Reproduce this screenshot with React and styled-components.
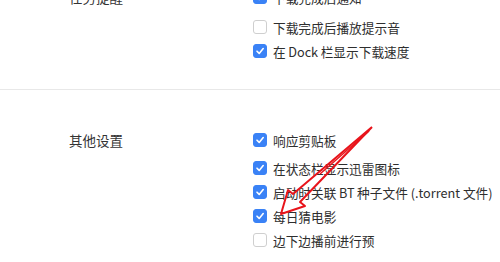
import React from 'react';
import styled, { createGlobalStyle } from 'styled-components';

const GlobalStyle = createGlobalStyle`
    html, body {
        margin: 0;
        padding: 0;
        background: #ffffff;
    }
    body {
        width: 500px;
        height: 262px;
        overflow: hidden;
        font-family: "Noto Sans CJK SC", "Noto Sans", sans-serif;
        color: #333333;
    }
`;

const topOptions = [
    { text: '下载完成后通知', checked: true, gap: 0 },
    { text: '下载完成后播放提示音', checked: false, gap: 6 },
    { text: '在\u2009Dock\u2009栏显示下载速度', checked: true, gap: 0 },
];

const otherOptions = [
    { text: '响应剪贴板', checked: true, gap: 0 },
    { text: '在状态栏显示迅雷图标', checked: true, gap: 4 },
    { text: '启动时关联\u2009BT\u2009种子文件 (.torrent 文件)', checked: true, gap: 0 },
    { text: '每日猜电影', checked: true, gap: 0 },
    { text: '边下边播前进行预', checked: false, gap: 0 },
];

export default function App() {
    return (
        <>
            <GlobalStyle />
            <Page>
                <Section $top>
                    <Label>任务提醒</Label>
                    <Options>
                        {topOptions.map((o) => (
                            <Option key={o.text} {...o} />
                        ))}
                    </Options>
                </Section>
                <Section>
                    <Label>其他设置</Label>
                    <Options>
                        {otherOptions.map((o) => (
                            <Option key={o.text} {...o} />
                        ))}
                    </Options>
                </Section>
                <Arrow />
            </Page>
        </>
    );
}

function Option({ text, checked, gap }) {
    return (
        <Row $gap={gap}>
            <Box $checked={checked}>
                {checked && (
                    <svg width="10" height="10" viewBox="0 0 10 10">
                        <polyline points="2,5.2 4.2,7.4 8.2,2.6" fill="none" stroke="#fff" strokeWidth="1.6" strokeLinecap="round" strokeLinejoin="round" />
                    </svg>
                )}
            </Box>
            <span>{text}</span>
        </Row>
    );
}

function Arrow() {
    return (
        <ArrowSvg width="500" height="262" viewBox="0 0 500 262">
            <path
                d="M372 127 L293 194 L288 190 L281 214 L305 206 L300 202 L372 127"
                fill="none"
                stroke="#e8141b"
                strokeWidth="2"
                strokeLinejoin="round"
            />
            <path d="M369 131 L320 174" stroke="#e8141b" strokeWidth="1.5" fill="none" />
        </ArrowSvg>
    );
}

const Page = styled.div`
    position: relative;
    margin-top: -15px;
`;

const Section = styled.div`
    display: grid;
    grid-template-columns: 253px 1fr;
    padding: ${(p) => (p.$top ? '0 0 26px' : '38px 0 0')};
    border-bottom: ${(p) => (p.$top ? '1px solid #e8e8e8' : 'none')};
`;

const Label = styled.div`
    padding-left: 69px;
    font-size: 13.5px;
    line-height: 24px;
    color: #333333;
`;

const Options = styled.div`
    display: flex;
    flex-direction: column;
`;

const Row = styled.div`
    display: flex;
    align-items: center;
    gap: 6px;
    height: 24px;
    margin-top: ${(p) => p.$gap}px;
    font-size: 12.7px;
    color: #2e2e2e;
    white-space: nowrap;
`;

const Box = styled.div`
    box-sizing: border-box;
    width: 14px;
    height: 14px;
    border-radius: 3px;
    display: flex;
    align-items: center;
    justify-content: center;
    background: ${(p) => (p.$checked ? '#3a82f6' : '#ffffff')};
    border: 1px solid ${(p) => (p.$checked ? '#3a82f6' : '#cfcfcf')};
`;

const ArrowSvg = styled.svg`
    position: absolute;
    left: 0;
    top: 15px;
    pointer-events: none;
`;
